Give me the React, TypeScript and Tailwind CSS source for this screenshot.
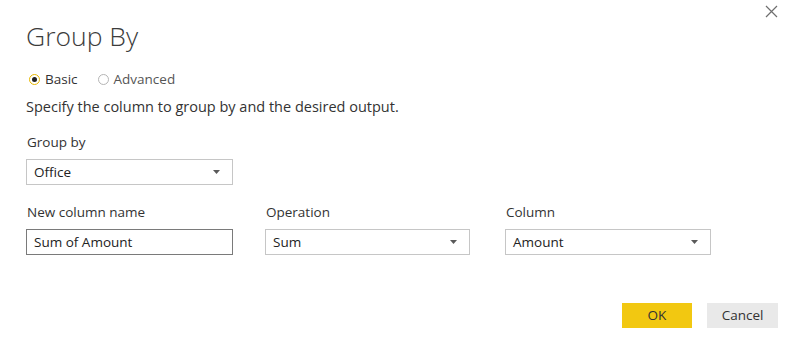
import React from "react";

function Caret() {
  return (
    <svg width="7" height="4" viewBox="0 0 7 4" className="shrink-0">
      <path d="M0 0h7L3.5 4z" fill="#5a5a5a" />
    </svg>
  );
}

function Select({ value, width }: { value: string; width: string }) {
  return (
    <div className={`${width} h-[26px] border border-[#c6c6c6] bg-white flex items-center justify-between pl-[7px] pr-[12px] text-[13.5px] text-[#222]`}>
      <span>{value}</span>
      <Caret />
    </div>
  );
}

function Field({ label, children, className }: { label: string; children: React.ReactNode; className?: string }) {
  return (
    <div className={className}>
      <div className="text-[13.5px] text-[#333] leading-[20px] mb-[7px] pl-[1px]">{label}</div>
      {children}
    </div>
  );
}

export default function App() {
  return (
    <div className="relative w-[800px] h-[356px] bg-white overflow-hidden font-['Segoe_UI','Open_Sans',sans-serif]">
      {/* close */}
      <button className="absolute right-[22px] top-[5px] w-[13px] h-[13px]">
        <svg width="13" height="13" viewBox="0 0 13 13">
          <path d="M1 1l11 11M12 1L1 12" stroke="#6e6e6e" strokeWidth="1.2" />
        </svg>
      </button>

      <div className="pl-[26px] pt-[18px]">
        <h1 className="text-[26.5px] font-light text-[#3c3c3c] leading-[36px]">Group By</h1>

        <div className="flex items-center gap-[20px] mt-[16px] text-[13.5px] leading-[18px]">
          <label className="flex items-center gap-[5px] text-[#333]">
            <span className="w-[11px] h-[11px] rounded-full border border-[#e8b800] flex items-center justify-center ml-[3px]">
              <span className="w-[5px] h-[5px] rounded-full bg-[#222]" />
            </span>
            Basic
          </label>
          <label className="flex items-center gap-[5px] text-[#555]">
            <span className="w-[11px] h-[11px] rounded-full border border-[#b5b5b5]" />
            Advanced
          </label>
        </div>

        <p className="mt-[8px] text-[14.5px] text-[#333] leading-[22px]">
          Specify the column to group by and the desired output.
        </p>

        <Field label="Group by" className="mt-[14px]">
          <Select value="Office" width="w-[207px]" />
        </Field>

        <div className="flex mt-[17px]">
          <Field label="New column name" className="w-[207px]">
            <div className="w-[207px] h-[26px] border border-[#7a7a7a] bg-white flex items-center pl-[7px] text-[13.5px] text-[#222]">
              Sum of Amount
            </div>
          </Field>
          <Field label="Operation" className="ml-[32px]">
            <Select value="Sum" width="w-[205px]" />
          </Field>
          <Field label="Column" className="ml-[35px]">
            <Select value="Amount" width="w-[206px]" />
          </Field>
        </div>

        <div className="flex justify-end gap-[15px] pr-[22px] mt-[48px]">
          <button className="w-[70px] h-[25px] bg-[#f2c811] text-[13.5px] text-[#333]">OK</button>
          <button className="w-[71px] h-[25px] bg-[#e9e9e9] text-[13.5px] text-[#333]">Cancel</button>
        </div>
      </div>
    </div>
  );
}
